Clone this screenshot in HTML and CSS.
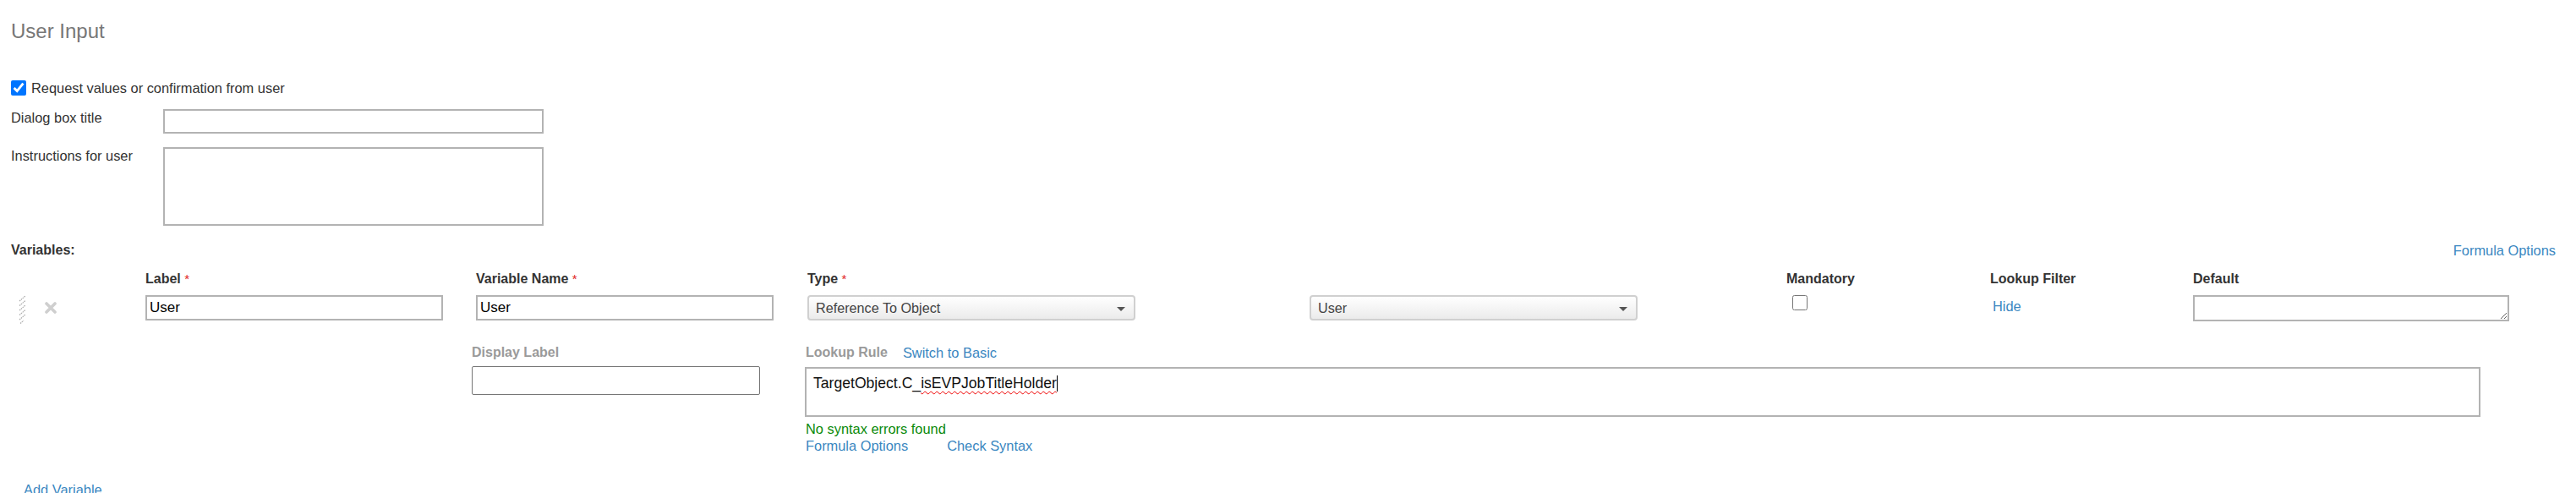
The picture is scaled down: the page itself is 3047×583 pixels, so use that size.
FILE: index.html
```html
<!DOCTYPE html>
<html>
<head>
  <title>User Input</title>
  <link rel="stylesheet" href="styles.css">
</head>
<body>
  <div class="page">
    <h1>User Input</h1>

    <label class="check-row">
      <input type="checkbox" class="big-check" checked>
      <span>Request values or confirmation from user</span>
    </label>

    <div class="form-row">
      <label class="row-label" for="dialog-title">Dialog box title</label>
      <input type="text" id="dialog-title" class="plain-input">
    </div>
    <div class="form-row">
      <label class="row-label" for="instructions">Instructions for user</label>
      <textarea id="instructions" class="plain-area"></textarea>
    </div>

    <div class="vars-bar">
      <strong>Variables:</strong>
      <a class="link" href="#">Formula Options</a>
    </div>

    <div class="var-grid">
      <div class="head"></div>
      <div class="head">Label <span class="req">*</span></div>
      <div class="head">Variable Name <span class="req">*</span></div>
      <div class="head">Type <span class="req">*</span></div>
      <div class="head"></div>
      <div class="head">Mandatory</div>
      <div class="head">Lookup Filter</div>
      <div class="head">Default</div>

      <div class="tools">
        <svg class="handle" width="10" height="34" viewBox="0 0 10 34">
          <path d="M1 7 L8 1 M1 12.5 L8 6.5 M1 18 L8 12 M1 23.5 L8 17.5 M1 29 L8 23 M2 33.5 L6 30" stroke="#aaa" stroke-width="1.2" stroke-dasharray="1.6 0.8" fill="none"/>
        </svg>
        <svg class="remove" width="16" height="14" viewBox="0 0 16 14">
          <path d="M3 2 L13 12 M13 2 L3 12" stroke="#cfcfcf" stroke-width="3.6" stroke-linecap="round"/>
        </svg>
      </div>
      <div class="cell"><input type="text" class="field" value="User"></div>
      <div class="cell"><input type="text" class="field" value="User"></div>
      <div class="cell">
        <div class="select-wrap"><select class="select"><option>Reference To Object</option></select></div>
      </div>
      <div class="cell">
        <div class="select-wrap"><select class="select"><option>User</option></select></div>
      </div>
      <div class="cell"><input type="checkbox" class="mand-check"></div>
      <div class="cell"><a class="link hide-link" href="#">Hide</a></div>
      <div class="cell"><textarea class="default-area"></textarea></div>

      <div class="display-col">
        <div class="sub-label">Display Label</div>
        <input type="text" class="display-input">
      </div>
      <div class="rule-col">
        <div class="rule-head">
          <span class="sub-label">Lookup Rule</span>
          <a class="link" href="#">Switch to Basic</a>
        </div>
        <div class="rule-box">TargetObject.C_<span class="misspelled">isEVPJobTitleHolder</span><span class="caret"></span></div>
        <div class="ok-msg">No syntax errors found</div>
        <div class="rule-links">
          <a class="link" href="#">Formula Options</a>
          <a class="link" href="#">Check Syntax</a>
        </div>
      </div>
    </div>

    <a class="link add-var" href="#">Add Variable</a>
  </div>
</body>
</html>
```

FILE: styles.css
```css
body {
  margin: 0;
  font-family: "Liberation Sans", Arial, sans-serif;
  font-size: 16.4px;
  color: #333;
  background: #fff;
}
.page {
  padding: 0 13px;
}
h1 {
  margin: 23px 0 0;
  font-size: 24px;
  line-height: 28px;
  font-weight: normal;
  color: #777;
}
.link {
  color: #3a87c1;
  text-decoration: none;
}
.check-row {
  display: flex;
  align-items: center;
  margin-top: 44px;
  height: 18px;
  line-height: 18px;
}
.big-check {
  width: 18px;
  height: 18px;
  margin: 0 6px 0 0;
}
.form-row {
  display: flex;
  align-items: flex-start;
  margin-top: 16px;
  line-height: 18px;
}
.row-label {
  width: 180px;
  padding-top: 1px;
}
.plain-input,
.plain-area {
  box-sizing: border-box;
  width: 450px;
  height: 29px;
  margin: 0;
  border: 2px solid #b3b3b3;
  font-family: inherit;
  font-size: 17px;
}
.plain-area {
  height: 93px;
  resize: none;
}
.vars-bar {
  display: flex;
  justify-content: space-between;
  margin-top: 20px;
  padding-right: 11px;
  line-height: 18px;
}
.vars-bar strong {
  font-size: 16px;
}
.var-grid {
  display: grid;
  grid-template-columns: 159px 391px 392px 594px 564px 241px 240px 1fr;
  margin-top: 16px;
}
.head {
  height: 18px;
  line-height: 18px;
  margin-bottom: 10px;
  font-size: 16px;
  font-weight: bold;
  color: #333;
}
.req {
  color: #e02020;
  font-weight: normal;
  font-size: 15px;
}
.tools {
  display: flex;
  align-items: flex-start;
  height: 30px;
  padding-left: 9px;
}
.remove {
  margin: 8px 0 0 20px;
}
.field {
  box-sizing: border-box;
  width: 352px;
  height: 30px;
  margin: 0;
  padding: 0 3px;
  border: 2px solid #b3b3b3;
  font-family: inherit;
  font-size: 17px;
  color: #000;
}
.select-wrap {
  position: relative;
  width: 388px;
}
.select-wrap::after {
  content: "";
  position: absolute;
  right: 12px;
  top: 14px;
  border-left: 5px solid transparent;
  border-right: 5px solid transparent;
  border-top: 5px solid #555;
  pointer-events: none;
}
.select {
  appearance: none;
  box-sizing: border-box;
  width: 100%;
  height: 30px;
  margin: 0;
  padding: 0 8px;
  border: 2px solid #d0d0d0;
  border-radius: 4px;
  background: linear-gradient(#fff, #ebebeb);
  font-family: inherit;
  font-size: 16.2px;
  color: #444;
}
.mand-check {
  width: 18px;
  height: 18px;
  margin: 0 0 0 7px;
}
.hide-link {
  display: inline-block;
  padding: 4px 0 0 3px;
  line-height: 18px;
}
.default-area {
  box-sizing: border-box;
  width: 374px;
  height: 31px;
  margin: 0;
  border: 2px solid #b3b3b3;
  vertical-align: top;
}
.display-col {
  grid-column: 3;
  margin: 28px 0 0 -5px;
}
.sub-label {
  line-height: 18px;
  font-size: 16px;
  font-weight: bold;
  color: #9a9a9a;
}
.display-col .sub-label {
  margin-bottom: 7px;
}
.display-input {
  box-sizing: border-box;
  width: 341px;
  height: 34px;
  margin: 0;
  border: 1px solid #767676;
  border-radius: 2px;
}
.rule-col {
  grid-column: 4 / -1;
  margin: 28px 0 0 -2px;
}
.rule-head {
  display: flex;
  gap: 18px;
  line-height: 18px;
  margin-bottom: 8px;
}
.rule-box {
  box-sizing: border-box;
  width: 1982px;
  height: 59px;
  margin-left: -1px;
  padding: 7px 8px;
  border: 2px solid #b3b3b3;
  font-size: 17.6px;
  color: #111;
}
.misspelled {
  text-decoration: underline wavy #e00;
  text-decoration-thickness: 1px;
  text-underline-offset: 3px;
}
.caret {
  display: inline-block;
  width: 1px;
  height: 19px;
  background: #000;
  vertical-align: -4px;
}
.ok-msg {
  margin-top: 4px;
  line-height: 20px;
  color: #0a8a0a;
}
.rule-links {
  display: flex;
  gap: 46px;
  line-height: 20px;
}
.add-var {
  display: block;
  margin: 33px 0 0 15px;
  line-height: 18px;
}
```
